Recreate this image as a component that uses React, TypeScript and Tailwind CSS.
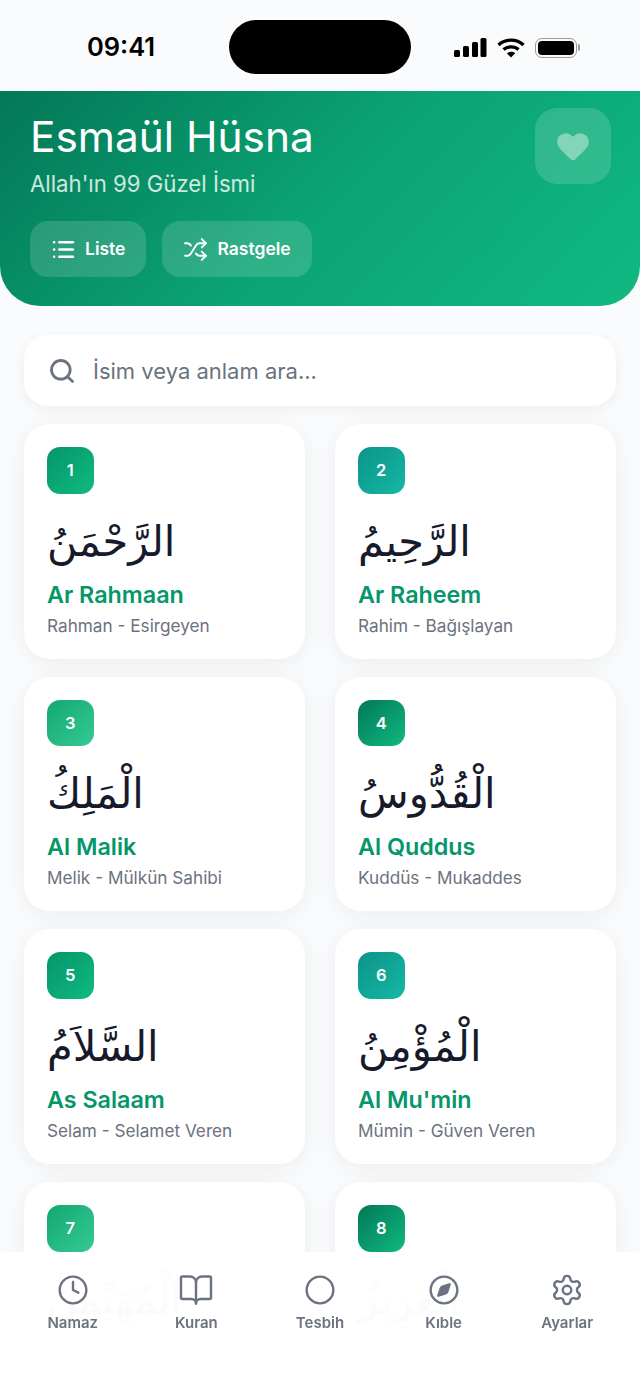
import { BookOpen, Circle, Clock, Heart, List, Search, Settings, Shuffle } from 'lucide-react'
import type { ReactNode } from 'react'

const names = [
  { id: 1, arabic: 'الرَّحْمَنُ', name: 'Ar Rahmaan', meaning: 'Rahman - Esirgeyen', badge: 'from-[#059669] to-[#10b981]' },
  { id: 2, arabic: 'الرَّحِيمُ', name: 'Ar Raheem', meaning: 'Rahim - Bağışlayan', badge: 'from-[#0d9488] to-[#14b8a6]' },
  { id: 3, arabic: 'الْمَلِكُ', name: 'Al Malik', meaning: 'Melik - Mülkün Sahibi', badge: 'from-[#10a872] to-[#34c994]' },
  { id: 4, arabic: 'الْقُدُّوسُ', name: 'Al Quddus', meaning: 'Kuddüs - Mukaddes', badge: 'from-[#047857] to-[#10b981]' },
  { id: 5, arabic: 'السَّلاَمُ', name: 'As Salaam', meaning: 'Selam - Selamet Veren', badge: 'from-[#059669] to-[#10b981]' },
  { id: 6, arabic: 'الْمُؤْمِنُ', name: "Al Mu'min", meaning: 'Mümin - Güven Veren', badge: 'from-[#0d9488] to-[#14b8a6]' },
  // the last row sits behind the tab bar, only its arabic shows through
  { id: 7, arabic: 'الْمُهَيْمِنُ', badge: 'from-[#10a872] to-[#34c994]' },
  { id: 8, arabic: 'الْعَزِيزُ', badge: 'from-[#047857] to-[#10b981]' },
]

function StatusIcons() {
  return (
    <div className="flex items-center gap-[10px]">
      <svg width="34" height="21" viewBox="0 0 34 21" fill="#000">
        <rect x="1" y="13" width="6" height="7" rx="1.5" />
        <rect x="10" y="9" width="6" height="11" rx="1.5" />
        <rect x="19" y="5" width="6" height="15" rx="1.5" />
        <rect x="27.5" y="1" width="6" height="19" rx="1.5" />
      </svg>
      <svg width="28" height="20" viewBox="0 0 28 20" fill="none" stroke="#000" strokeWidth="3.4">
        <path d="M1.5 7 C8.5 0.5 19.5 0.5 26.5 7" />
        <path d="M6.5 11.5 C10.5 8 17.5 8 21.5 11.5" />
        <path d="M14 19.5 L9.8 15.2 C12 13.4 16 13.4 18.2 15.2 Z" fill="#000" stroke="none" />
      </svg>
      <div className="flex items-center gap-[1px]">
        <div className="h-[20px] w-[42px] rounded-[7px] border-[1.5px] border-[#9a9a9a] p-[2px]">
          <div className="h-full w-full rounded-[4px] bg-black" />
        </div>
        <div className="h-[7px] w-[2px] rounded-r-full bg-[#9a9a9a]" />
      </div>
    </div>
  )
}

function StatusBar() {
  return (
    <div className="grid h-[91px] grid-cols-[229px_182px_229px] items-center pt-[4px]">
      <div className="pl-[13px] text-center text-[25.5px] font-semibold text-black">09:41</div>
      <div className="-mt-[1px] h-[54px] rounded-[27px] bg-black" />
      <div className="flex justify-end pr-[60px]">
        <StatusIcons />
      </div>
    </div>
  )
}

function HeaderButton({ icon, label }: { icon: ReactNode; label: string }) {
  return (
    <button className="flex h-[56px] items-center gap-[9px] rounded-[18px] bg-white/15 px-[21px] pt-[1px] text-[17.5px] font-semibold text-white">
      {icon}
      {label}
    </button>
  )
}

function Header() {
  return (
    <div className="flex h-[215px] items-start justify-between rounded-b-[40px] bg-linear-135 from-[#047857] via-[#0ba373] to-[#10b981] pl-[30px] pr-[29px] pt-[17px]">
      <div>
        <h1 className="text-[42.4px] leading-[58px] font-normal text-white">Esmaül Hüsna</h1>
        <p className="mt-[3px] text-[22.2px] leading-[30px] text-white/80">Allah'ın 99 Güzel İsmi</p>
        <div className="mt-[22px] flex gap-[16px]">
          <HeaderButton icon={<List size={25} strokeWidth={2.4} />} label="Liste" />
          <HeaderButton icon={<Shuffle size={25} strokeWidth={1.8} />} label="Rastgele" />
        </div>
      </div>
      <div className="flex h-[76px] w-[76px] items-center justify-center rounded-[22px] bg-white/15">
        <Heart size={38} className="fill-white/40 text-transparent" />
      </div>
    </div>
  )
}

function SearchBar() {
  return (
    <div className="mx-[24px] mt-[29px] flex h-[71px] items-center gap-[17px] rounded-[24px] bg-white px-[24px] shadow-[0_3px_14px_rgba(0,0,0,0.06)]">
      <Search size={28} strokeWidth={2.4} className="shrink-0 text-[#6b7280]" />
      <input
        className="w-full bg-transparent pt-[1px] text-[22px] text-[#374151] outline-none placeholder:text-[#6b7280]"
        placeholder="İsim veya anlam ara..."
      />
    </div>
  )
}

function NameCard({ item }: { item: (typeof names)[number] }) {
  return (
    <div className="h-[234.7px] rounded-[26px] bg-white px-[23px] pt-[23px] shadow-[0_4px_24px_rgba(0,0,0,0.06)]">
      <div className={`flex h-[46.5px] w-[46.5px] items-center justify-center rounded-[13px] bg-linear-to-br text-[16.5px] font-semibold text-white ${item.badge}`}>
        {item.id}
      </div>
      <div dir="ltr" className="mt-[18px] h-[60px] text-[41.5px] leading-[60px] text-[#161a2b] font-['DejaVu_Sans',sans-serif]">
        {item.arabic}
      </div>
      {item.name ? <div className="mt-[7px] text-[23.3px] leading-[32px] font-semibold text-[#059669]">{item.name}</div> : null}
      {item.meaning ? <div className="mt-[2px] text-[17.2px] leading-[26px] text-[#6b7280]">{item.meaning}</div> : null}
    </div>
  )
}

function CompassIcon() {
  return (
    <svg width="32" height="32" viewBox="0 0 24 24" fill="none" stroke="#6b7280" strokeWidth="1.8" strokeLinecap="round" strokeLinejoin="round">
      <circle cx="12" cy="12" r="10" />
      <path fill="#6b7280" d="m16.24 7.76-1.804 5.411a2 2 0 0 1-1.265 1.265L7.76 16.24l1.804-5.411a2 2 0 0 1 1.265-1.265z" />
    </svg>
  )
}

const tabs: Array<{ label: string; icon: ReactNode }> = [
  { label: 'Namaz', icon: <Clock size={32} strokeWidth={1.8} /> },
  { label: 'Kuran', icon: <BookOpen size={36} strokeWidth={1.6} /> },
  { label: 'Tesbih', icon: <Circle size={32} strokeWidth={1.8} /> },
  { label: 'Kıble', icon: <CompassIcon /> },
  { label: 'Ayarlar', icon: <Settings size={34} strokeWidth={1.7} /> },
]

function BottomNav() {
  return (
    <div className="absolute inset-x-0 bottom-0 grid h-[139px] grid-cols-5 bg-white/[0.98] px-[11px] pt-[20px] backdrop-blur-[1px]">
      {tabs.map((tab) => (
        <div key={tab.label} className="flex flex-col items-center text-[#6b7280]">
          <div className="flex h-[36px] items-center justify-center">{tab.icon}</div>
          <span className="mt-[5px] text-[15px] leading-[20px] font-semibold">{tab.label}</span>
        </div>
      ))}
    </div>
  )
}

export default function App() {
  return (
    <div className="relative h-[1391px] w-[640px] overflow-hidden bg-[#fafbfc] font-['Inter',sans-serif]">
      <StatusBar />
      <Header />
      <SearchBar />
      <div className="mx-[24px] mt-[18px] grid grid-cols-2 gap-x-[30px] gap-y-[18px]">
        {names.map((item) => (
          <NameCard key={item.id} item={item} />
        ))}
      </div>
      <BottomNav />
    </div>
  )
}
